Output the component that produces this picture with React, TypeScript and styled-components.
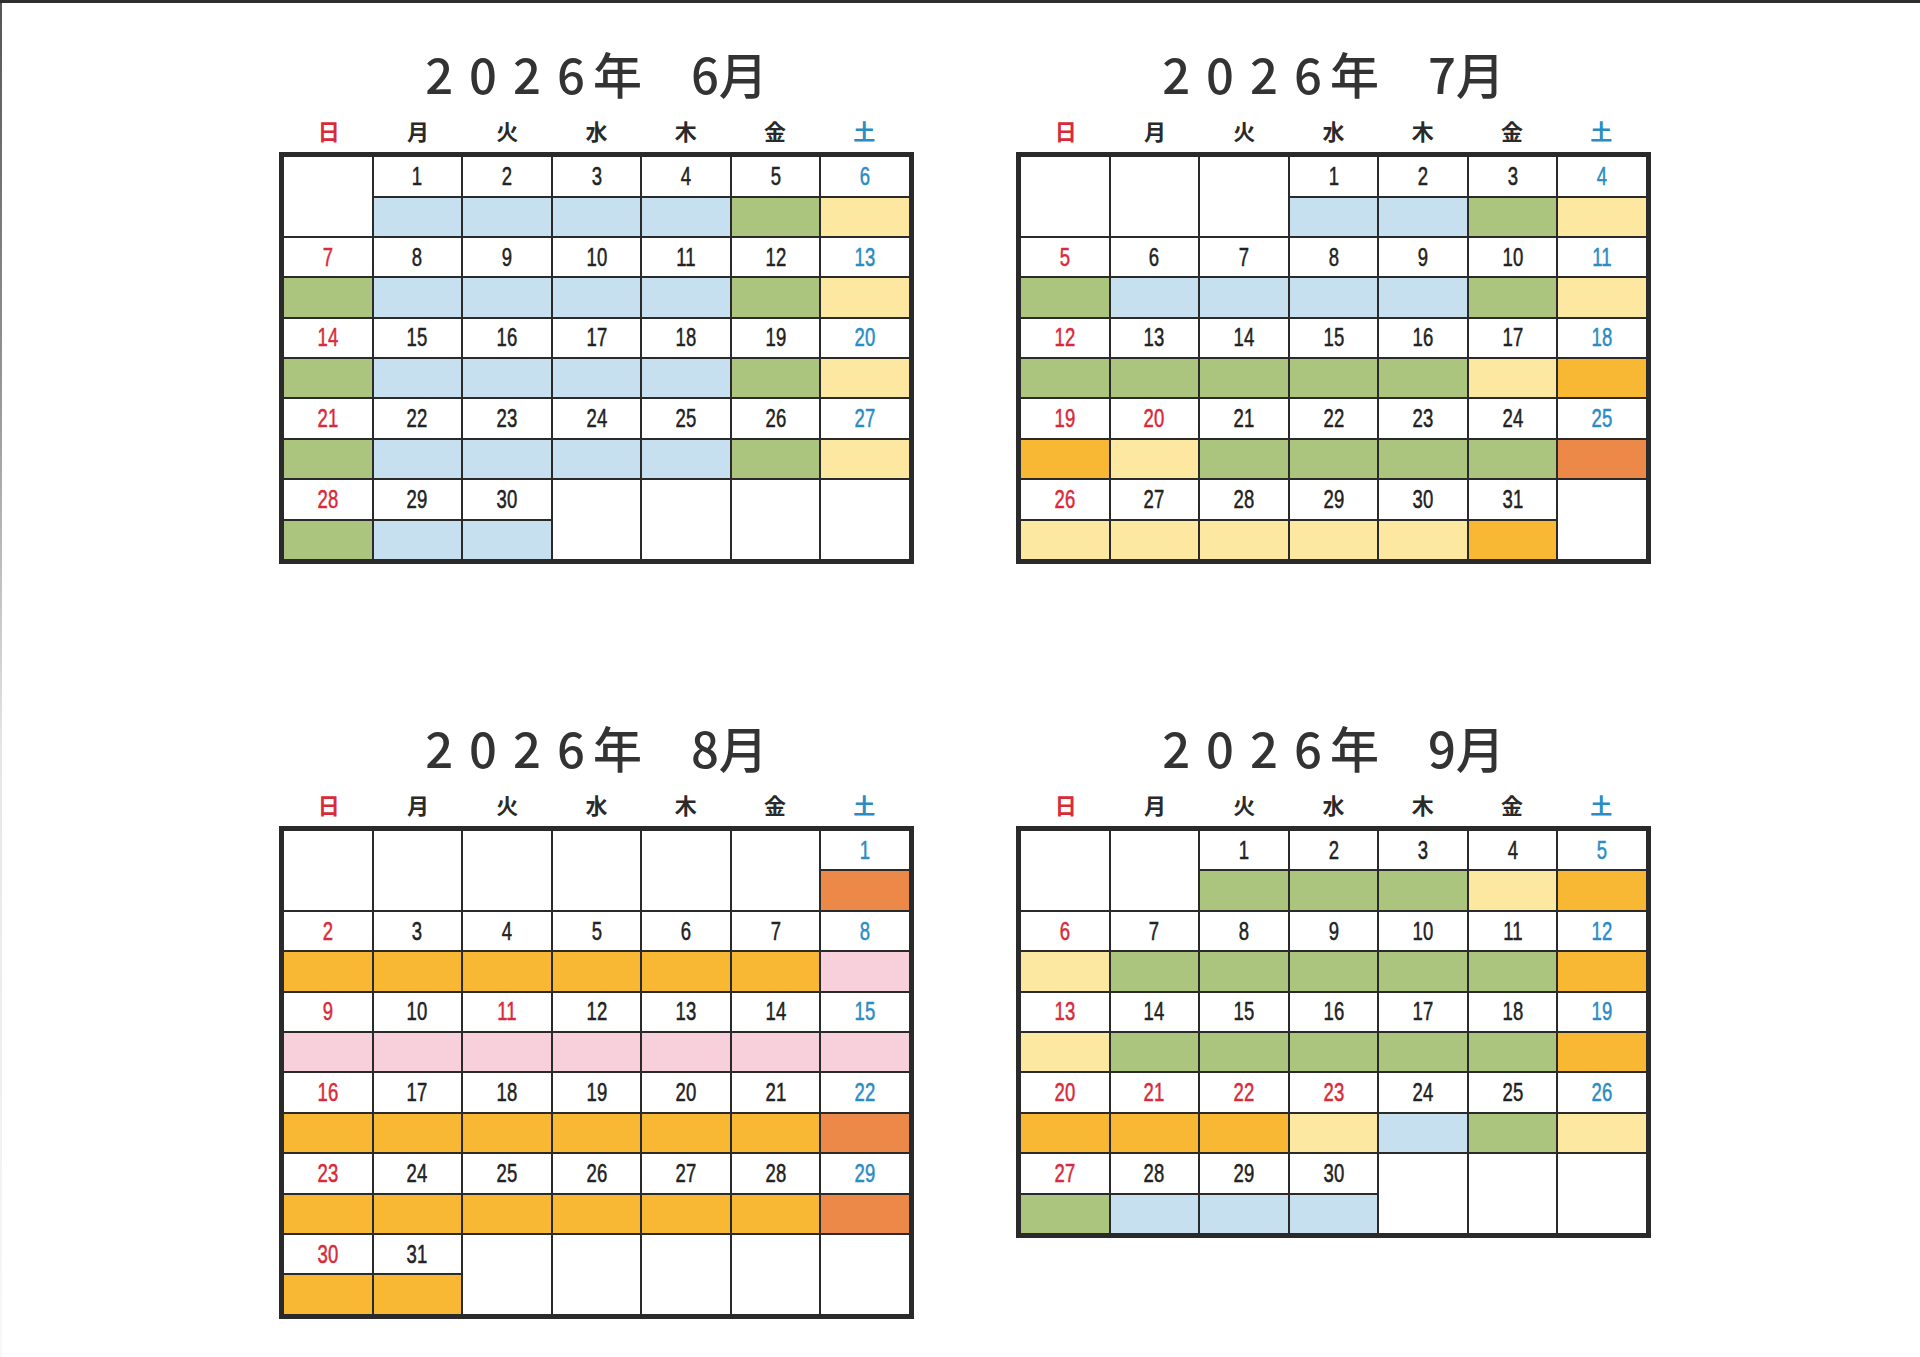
import React from "react";
import styled, { createGlobalStyle } from "styled-components";

const GlobalStyle = createGlobalStyle`
  html, body { margin: 0; padding: 0; background: #ffffff; }
  body { font-family: "Noto Sans CJK JP", "Noto Sans", sans-serif; }
`;

const SWATCH: Record<string, string> = {
  b: "#c6e0f0",
  g: "#abc47e",
  y: "#fde8a2",
  o: "#f8b834",
  d: "#ec8848",
  p: "#f8d0dc",
};

const TONE: Record<string, string> = {
  red: "#d92a3a",
  blue: "#2a8cc4",
  ink: "#222222",
};

type Month = {
  month: number;
  offset: number;
  colors: string;
  holidays: number[];
};

const MONTHS: Month[] = [
  {
    month: 6,
    offset: 1,
    colors: ["bbbbgy", "gbbbbgy", "gbbbbgy", "gbbbbgy", "gbb"].join(""),
    holidays: [],
  },
  {
    month: 7,
    offset: 3,
    colors: ["bbgy", "gbbbbgy", "gggggyo", "oyggggd", "yyyyyo"].join(""),
    holidays: [20],
  },
  {
    month: 8,
    offset: 6,
    colors: ["d", "oooooop", "ppppppp", "ooooood", "ooooood", "oo"].join(""),
    holidays: [11],
  },
  {
    month: 9,
    offset: 2,
    colors: ["gggyo", "ygggggo", "ygggggo", "oooybgy", "gbbb"].join(""),
    holidays: [21, 22, 23],
  },
];

const WEEKDAYS = ["日", "月", "火", "水", "木", "金", "土"];

const Page = styled.div`
  position: relative;
  width: 1920px;
  min-height: 1357px;
  box-sizing: border-box;
  border-top: 3px solid #2e2e2e;
  padding: 42px 0 0 279px;
  display: grid;
  grid-template-columns: 635px 635px;
  column-gap: 102px;
  row-gap: 155px;
  align-items: start;
  align-content: start;
  background: #ffffff;
  &::before {
    content: "";
    position: absolute;
    left: 0;
    top: 0;
    width: 2px;
    height: 100%;
    background: linear-gradient(#555 0%, #9a9a9a 30%, #e6e6e6 55%, #f8f8f8 100%);
  }
`;

const Block = styled.section`
  display: flex;
  flex-direction: column;
`;

const Title = styled.h2`
  margin: 0;
  height: 64px;
  box-sizing: border-box;
  padding-bottom: 8px;
  display: flex;
  align-items: center;
  justify-content: center;
  font-family: "Noto Sans CJK JP", "Noto Sans", sans-serif;
  font-weight: 500;
  font-size: 49px;
  line-height: 56px;
  color: #333333;
  white-space: pre;
`;

const Year = styled.span`
  letter-spacing: 16px;
`;

const YearLast = styled.span`
  letter-spacing: 8px;
`;

const Label = styled.span`
  letter-spacing: 0;
`;

const WeekHeader = styled.div`
  display: grid;
  grid-template-columns: repeat(7, 1fr);
  height: 43px;
  padding: 0 5px;
  box-sizing: border-box;
`;

const WeekdayName = styled.div<{ $tone: string }>`
  text-align: center;
  padding-top: 4px;
  line-height: 34px;
  font-family: "Noto Sans CJK JP", "Noto Sans", sans-serif;
  font-size: 22px;
  font-weight: 700;
  color: ${(p) => p.$tone};
`;

const Grid = styled.div`
  display: grid;
  grid-template-columns: repeat(7, 1fr);
  grid-auto-rows: 78.8px;
  gap: 2px;
  background: #2a2a2a;
  border: 5px solid #2a2a2a;
`;

const Cell = styled.div`
  display: flex;
  flex-direction: column;
  background: #ffffff;
`;

const DateBox = styled.div`
  height: 38.5px;
  display: flex;
  align-items: center;
  justify-content: center;
  background: #ffffff;
`;

const Num = styled.span<{ $tone: string }>`
  display: inline-block;
  font-family: "Liberation Sans", Arial, sans-serif;
  font-size: 25px;
  line-height: 25px;
  transform: scaleX(0.74);
  -webkit-text-stroke: 0.5px ${(p) => p.$tone};
  color: ${(p) => p.$tone};
`;

const ColorBox = styled.div<{ $bg: string }>`
  flex: 1;
  border-top: 2px solid #2a2a2a;
  background: ${(p) => p.$bg};
`;

function MonthCalendar({ data }: { data: Month }) {
  const days = data.colors.length;
  const total = Math.ceil((data.offset + days) / 7) * 7;
  const cells = Array.from({ length: total }, (_, i) => {
    const d = i - data.offset + 1;
    if (d < 1 || d > days) return <Cell key={i} />;
    const dow = i % 7;
    const tone =
      dow === 0 || data.holidays.includes(d) ? TONE.red : dow === 6 ? TONE.blue : TONE.ink;
    return (
      <Cell key={i}>
        <DateBox>
          <Num $tone={tone}>{d}</Num>
        </DateBox>
        <ColorBox $bg={SWATCH[data.colors[d - 1]]} />
      </Cell>
    );
  });

  return (
    <Block>
      <Title>
        <Year>202</Year>
        <YearLast>6</YearLast>
        <Label>{"年　" + data.month + "月"}</Label>
      </Title>
      <WeekHeader>
        {WEEKDAYS.map((w, i) => (
          <WeekdayName key={w} $tone={i === 0 ? TONE.red : i === 6 ? TONE.blue : "#2a2a2a"}>
            {w}
          </WeekdayName>
        ))}
      </WeekHeader>
      <Grid>{cells}</Grid>
    </Block>
  );
}

export default function App() {
  return (
    <>
      <GlobalStyle />
      <Page>
        {MONTHS.map((m) => (
          <MonthCalendar key={m.month} data={m} />
        ))}
      </Page>
    </>
  );
}
